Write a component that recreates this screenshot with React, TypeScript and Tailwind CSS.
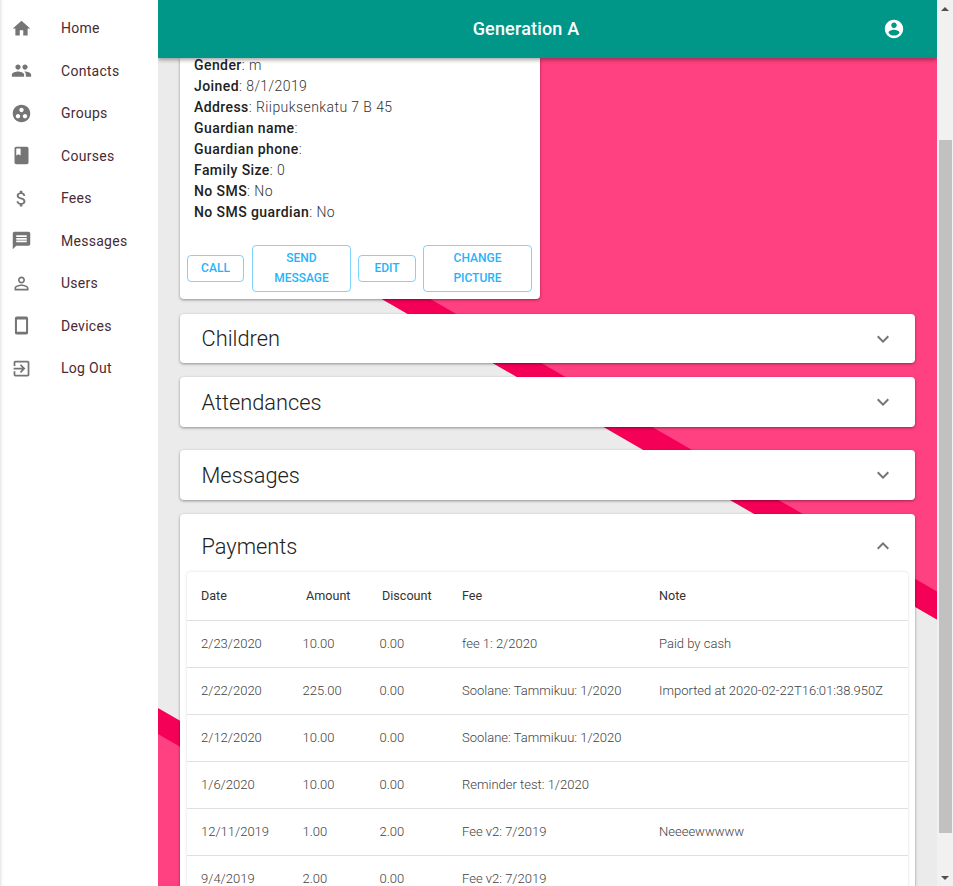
import React from 'react';

const navIcons: Record<string, string> = {
  Home: 'M10 20v-6h4v6h5v-8h3L12 3 2 12h3v8z',
  Contacts: 'M16 11c1.66 0 2.99-1.34 2.99-3S17.66 5 16 5c-1.66 0-3 1.34-3 3s1.34 3 3 3zm-8 0c1.66 0 2.99-1.34 2.99-3S9.66 5 8 5C6.34 5 5 6.34 5 8s1.34 3 3 3zm0 2c-2.33 0-7 1.17-7 3.5V19h14v-2.5c0-2.33-4.67-3.5-7-3.5zm8 0c-.29 0-.62.02-.97.05 1.16.84 1.97 1.97 1.97 3.45V19h6v-2.5c0-2.33-4.67-3.5-7-3.5z',
  Groups: 'M12 2C6.48 2 2 6.48 2 12s4.48 10 10 10 10-4.48 10-10S17.52 2 12 2zM8 17.5c-1.38 0-2.5-1.12-2.5-2.5s1.12-2.5 2.5-2.5 2.5 1.12 2.5 2.5-1.12 2.5-2.5 2.5zM9.5 8c0-1.38 1.12-2.5 2.5-2.5s2.5 1.12 2.5 2.5-1.12 2.5-2.5 2.5S9.5 9.38 9.5 8zm6.5 9.5c-1.38 0-2.5-1.12-2.5-2.5s1.12-2.5 2.5-2.5 2.5 1.12 2.5 2.5-1.12 2.5-2.5 2.5z',
  Courses: 'M18 2H6c-1.1 0-2 .9-2 2v16c0 1.1.9 2 2 2h12c1.1 0 2-.9 2-2V4c0-1.1-.9-2-2-2zM6 4h5v8l-2.5-1.5L6 12V4z',
  Fees: 'M11.8 10.9c-2.27-.59-3-1.2-3-2.15 0-1.09 1.01-1.85 2.7-1.85 1.78 0 2.44.85 2.5 2.1h2.21c-.07-1.72-1.12-3.3-3.21-3.81V3h-3v2.16c-1.94.42-3.5 1.68-3.5 3.61 0 2.31 1.91 3.46 4.7 4.13 2.5.6 3 1.48 3 2.41 0 .69-.49 1.79-2.7 1.79-2.06 0-2.87-.92-2.98-2.1h-2.2c.12 2.19 1.76 3.42 3.68 3.83V21h3v-2.15c1.95-.37 3.5-1.5 3.5-3.55 0-2.84-2.43-3.81-4.7-4.4z',
  Messages: 'M20 2H4c-1.1 0-1.99.9-1.99 2L2 22l4-4h14c1.1 0 2-.9 2-2V4c0-1.1-.9-2-2-2zm-2 12H6v-2h12v2zm0-3H6V9h12v2zm0-3H6V6h12v2z',
  Users: 'M12 5.9c1.16 0 2.1.94 2.1 2.1s-.94 2.1-2.1 2.1S9.9 9.16 9.9 8s.94-2.1 2.1-2.1m0 9c2.97 0 6.1 1.46 6.1 2.1v1.1H5.9V17c0-.64 3.13-2.1 6.1-2.1M12 4C9.79 4 8 5.79 8 8s1.79 4 4 4 4-1.79 4-4-1.79-4-4-4zm0 9c-2.67 0-8 1.34-8 4v3h16v-3c0-2.66-5.33-4-8-4z',
  Devices: 'M17.5 1.7h-11c-1.1 0-2 .9-2 2v16.6c0 1.1.9 2 2 2h11c1.1 0 2-.9 2-2V3.7c0-1.1-.9-2-2-2zm-.3 17.3H6.8V5h10.4v14z',
  'Log Out': 'M10.09 15.59L11.5 17l5-5-5-5-1.41 1.41L12.67 11H3v2h9.67l-2.58 2.59zM19 3H5c-1.11 0-2 .9-2 2v4h2V5h14v14H5v-4H3v4c0 1.1.89 2 2 2h14c1.1 0 2-.9 2-2V5c0-1.1-.9-2-2-2z',
};

const details = [
  ['Gender', 'm'],
  ['Joined', '8/1/2019'],
  ['Address', 'Riipuksenkatu 7 B 45'],
  ['Guardian name', ''],
  ['Guardian phone', ''],
  ['Family Size', '0'],
  ['No SMS', 'No'],
  ['No SMS guardian', 'No'],
];

const payments = [
  ['2/23/2020', '10.00', '0.00', 'fee 1: 2/2020', 'Paid by cash'],
  ['2/22/2020', '225.00', '0.00', 'Soolane: Tammikuu: 1/2020', 'Imported at 2020-02-22T16:01:38.950Z'],
  ['2/12/2020', '10.00', '0.00', 'Soolane: Tammikuu: 1/2020', ''],
  ['1/6/2020', '10.00', '0.00', 'Reminder test: 1/2020', ''],
  ['12/11/2019', '1.00', '2.00', 'Fee v2: 7/2019', 'Neeeewwwww'],
  ['9/4/2019', '2.00', '0.00', 'Fee v2: 7/2019', ''],
];

const Icon = ({ d, className }: { d: string; className: string }) => (
  <svg viewBox="0 0 24 24" fill="currentColor" className={className}>
    <path d={d} />
  </svg>
);

const Accordion = ({ title, className }: { title: string; className: string }) => (
  <div className={`flex items-center justify-between rounded bg-white pl-[21.5px] pr-5 shadow-[0_1px_3px_rgba(0,0,0,0.4)] ${className}`}>
    <span className="pt-[2px] text-[21.8px] font-light text-[#212121]">{title}</span>
    <Icon d="M16.59 8.59L12 13.17 7.41 8.59 6 10l6 6 6-6z" className="h-6 w-6 text-[#757575]" />
  </div>
);

const OutlineButton = ({ label, className }: { label: string; className: string }) => (
  <button className={`rounded border border-[#29b6f6]/60 px-2 pb-[2px] text-center text-xs leading-5 font-medium text-[#1fb4fb] uppercase ${className}`}>
    {label}
  </button>
);

export default function App() {
  return (
    <div className="flex h-screen w-full overflow-hidden font-['Roboto',sans-serif]">
      <nav className="w-[158px] shrink-0 bg-white pt-[7px] shadow-[inset_3px_0_3px_-2px_rgba(0,0,0,0.12)]">
        {Object.entries(navIcons).map(([label, d]) => (
          <div key={label} className="flex h-[42.5px] items-center pl-[10.5px]">
            <Icon d={d} className="h-[21px] w-[21px] text-[#757575]" />
            <span className="ml-[29.5px] text-sm tracking-[0.02em] text-[#4a2a33]">{label}</span>
          </div>
        ))}
      </nav>

      <div className="relative flex min-w-0 flex-1 flex-col overflow-hidden bg-[#ff4081]">
        {/* background artwork */}
        <svg viewBox="0 0 779 886" className="absolute inset-0 h-[886px] w-[779px]">
          <polygon points="0,0 140,0 140,250.6 779,619.4 779,886 0,886" fill="#ebebeb" />
          <polygon points="140,250.6 779,619.4 779,591.4 140,222.6" fill="#f50057" />
          <polygon points="0,708 779,1158 779,1200 0,1200" fill="#f50057" />
          <polygon points="0,734 779,1184 779,1200 0,1200" fill="#ff4081" />
        </svg>

        <header className="relative z-10 flex h-[58px] shrink-0 items-center bg-[#009688] pr-8 shadow-[0_2px_4px_rgba(0,0,0,0.35)]">
          <h1 className="flex-1 pl-[11px] text-center text-lg font-medium tracking-[0.01em] text-white">Generation A</h1>
          <Icon d="M12 2C6.48 2 2 6.48 2 12s4.48 10 10 10 10-4.48 10-10S17.52 2 12 2zm0 3c1.66 0 3 1.34 3 3s-1.34 3-3 3-3-1.34-3-3 1.34-3 3-3zm0 14.2c-2.5 0-4.71-1.28-6-3.22.03-1.99 4-3.08 6-3.08 1.99 0 5.97 1.09 6 3.08-1.29 1.94-3.5 3.22-6 3.22z" className="h-[22px] w-[22px] text-white" />
        </header>

        <main className="relative flex flex-col px-[22px]">
          <section className="w-[360px] rounded-b bg-white shadow-[0_1px_3px_rgba(0,0,0,0.4)]">
            <div className="-mt-[3px] pl-[14px] text-sm leading-[21px] font-light tracking-[0.03em] text-[#333]">
              {details.map(([k, v]) => (
                <div key={k}>
                  <b className="font-medium tracking-[0.03em] text-[#212121]">{k}</b>: {v}
                </div>
              ))}
            </div>
            <div className="mt-[22px] flex items-center pb-[7px] pl-[7px]">
              <OutlineButton label="Call" className="h-[27px] w-[57px]" />
              <OutlineButton label="Send message" className="ml-2 h-[47px] w-[99px]" />
              <OutlineButton label="Edit" className="ml-[7px] h-[27px] w-[58px]" />
              <OutlineButton label="Change picture" className="ml-[7px] h-[47px] w-[109px]" />
            </div>
          </section>

          <Accordion title="Children" className="mt-[15px] h-[49px]" />
          <Accordion title="Attendances" className="mt-[14px] h-[50px]" />
          <Accordion title="Messages" className="mt-[23px] h-[50px]" />

          <section className="mt-[14px] rounded-t bg-white px-[7px] shadow-[0_1px_3px_rgba(0,0,0,0.4)]">
            <div className="flex h-[58px] items-center justify-between pt-[6px] pr-[13px] pl-[14.5px]">
              <span className="pt-[2px] text-[21.8px] font-light text-[#212121]">Payments</span>
              <Icon d="M12 8l-6 6 1.41 1.41L12 10.83l4.59 4.58L18 14z" className="h-6 w-6 text-[#757575]" />
            </div>
            <div className="rounded-t bg-white text-[13px] text-[#424242] shadow-[0_0_3px_rgba(0,0,0,0.15)]">
              <div className="grid h-[49px] grid-cols-[101.5px_77px_82.5px_197px_1fr] items-center border-b border-[#e0e0e0] pl-[14px] font-normal text-[12.6px] text-[#333]">
                <span>Date</span>
                <span className="pl-[3.5px]">Amount</span>
                <span className="pl-[2.5px]">Discount</span>
                <span>Fee</span>
                <span>Note</span>
              </div>
              {payments.map((row) => (
                <div key={row[0]} className="grid h-[47px] grid-cols-[101.5px_77px_82.5px_197px_1fr] items-center border-b border-[#e0e0e0] pl-[14px] font-light">
                  {row.map((cell, i) => (
                    <span key={i} className="whitespace-nowrap">{cell}</span>
                  ))}
                </div>
              ))}
            </div>
          </section>
        </main>
      </div>

      <div className="flex w-4 shrink-0 flex-col bg-[#f1f1f1]">
        <div className="flex h-[17px] items-center justify-center text-[#505050]">
          <div className="h-0 w-0 border-x-[4px] border-b-[4px] border-x-transparent border-b-current" />
        </div>
        <div className="mt-[123px] mr-px ml-[2px] h-[693px] bg-[#c1c1c1]" />
        <div className="mt-auto flex h-[17px] items-center justify-center text-[#505050]">
          <div className="h-0 w-0 border-x-[4px] border-t-[4px] border-x-transparent border-t-current" />
        </div>
      </div>
    </div>
  );
}
